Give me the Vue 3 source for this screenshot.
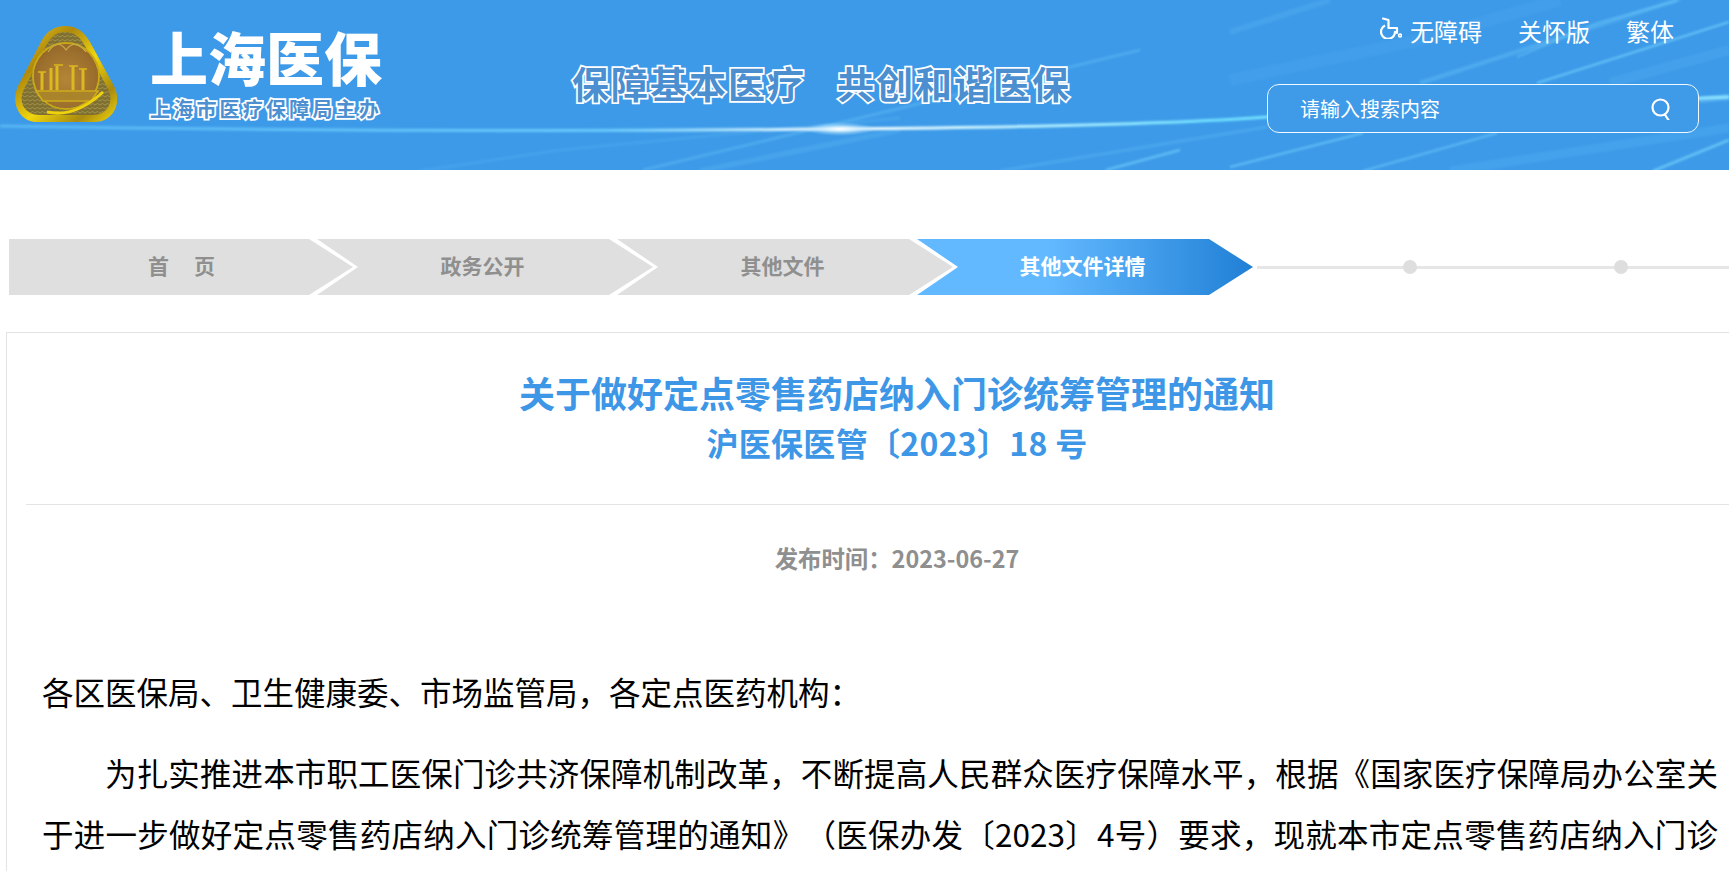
<script setup>
const crumbs = [
  { label: '首　页', first: true },
  { label: '政务公开' },
  { label: '其他文件' },
  { label: '其他文件详情', active: true }
]
const nav = ['关怀版', '繁体']
const streaks = [
  { d: 'M643 170 L922 103 L1140 50', w: 2.5, o: 0.3 },
  { d: 'M700 171 L900 130', w: 5, o: 0.16 },
  { d: 'M420 171 L560 150 L900 118', w: 3, o: 0.12 },
  { d: 'M1106 170 L1180 150', w: 2.5, o: 0.55 },
  { d: 'M1000 171 L1230 133 L1267 127', w: 3, o: 0.2 },
  { d: 'M1230 167 L1363 133', w: 2, o: 0.6 },
  { d: 'M1363 171 L1497 133', w: 2, o: 0.5 },
  { d: 'M1420 83 L1677 0', w: 4, o: 0.28 },
  { d: 'M1517 57 L1597 23 L1680 0', w: 2, o: 0.35 },
  { d: 'M1537 83 L1729 22', w: 2.2, o: 0.65 },
  { d: 'M1230 32 L1330 0', w: 6, o: 0.13 },
  { d: 'M1653 171 L1729 140', w: 2.5, o: 0.65 },
  { d: 'M1699 100 L1729 97', w: 6, o: 0.35 },
  { d: 'M1450 171 L1729 128', w: 9, o: 0.12 },
  { d: 'M1230 80 L1420 40 L1560 0', w: 12, o: 0.07 },
  { d: 'M1610 83 L1729 50', w: 10, o: 0.1 }
]
</script>

<template>
  <div class="page">
    <header class="header">
      <svg class="sky" viewBox="0 0 1729 170" width="1729" height="170" aria-hidden="true">
        <defs>
          <linearGradient id="beam" x1="0" x2="1" y1="0" y2="0">
            <stop offset="0" stop-color="#6fd3ff" stop-opacity=".5" />
            <stop offset=".35" stop-color="#6fd3ff" stop-opacity=".85" />
            <stop offset=".49" stop-color="#ffffff" />
            <stop offset=".7" stop-color="#6fe0ff" />
            <stop offset="1" stop-color="#8fe4ff" />
          </linearGradient>
          <radialGradient id="flare">
            <stop offset="0" stop-color="#ffffff" />
            <stop offset=".35" stop-color="#d9f4ff" stop-opacity=".75" />
            <stop offset="1" stop-color="#9fdcff" stop-opacity="0" />
          </radialGradient>
          <filter id="soft" x="-5%" y="-50%" width="110%" height="200%"><feGaussianBlur stdDeviation="1" /></filter>
        </defs>
        <g filter="url(#soft)" fill="none" stroke="#7bd8ff">
          <path v-for="(s, i) in streaks" :key="i" :d="s.d" :stroke-width="s.w" :stroke-opacity="s.o" />
        </g>
        <path d="M0 126 Q 420 133 840 129 Q 1150 126 1267 117 L 1729 97" fill="none" stroke="url(#beam)" stroke-width="3" filter="url(#soft)" />
        <ellipse cx="840" cy="129" rx="36" ry="7" fill="url(#flare)" />
      </svg>

      <div class="brand">
        <svg class="logo" viewBox="0 0 102 96" width="102" height="96" aria-hidden="true">
          <defs>
            <linearGradient id="gold" x1="0" y1="0" x2="1" y2="1">
              <stop offset="0" stop-color="#e9cc1a" />
              <stop offset=".3" stop-color="#b0890f" />
              <stop offset=".55" stop-color="#f0d60a" />
              <stop offset=".8" stop-color="#a98a12" />
              <stop offset="1" stop-color="#f4d90c" />
            </linearGradient>
            <radialGradient id="bronze" cx=".5" cy=".55" r=".6">
              <stop offset="0" stop-color="#b38636" />
              <stop offset="1" stop-color="#93662a" />
            </radialGradient>
            <pattern id="scale" width="5" height="4" patternUnits="userSpaceOnUse">
              <rect width="5" height="4" fill="#7f6f33" />
              <path d="M0 3 Q2.5 0 5 3" fill="none" stroke="#a89a4c" stroke-width=".8" />
            </pattern>
            <filter id="logoBlur"><feGaussianBlur stdDeviation=".45" /></filter>
          </defs>
          <g filter="url(#logoBlur)">
            <path d="M50 0C62 0 69 6 75 16L99 60C108 78 97 96 80 96L22 96C5 96-5 78 3 60L27 14C32 5 40 0 50 0Z" fill="url(#gold)" />
            <path d="M50 6C59 6 65 11 70 20L93 63C100 77 91 89 78 89L24 89C11 89 2 77 9 63L32 18C37 10 42 6 50 6Z" fill="url(#scale)" />
            <circle cx="51" cy="50" r="33" fill="none" stroke="#c9a715" stroke-width="2" />
            <circle cx="51" cy="50" r="32" fill="url(#bronze)" />
            <path d="M33 26Q43 12 51 24Q60 12 71 26" fill="none" stroke="#c9a84a" stroke-width="1.2" />
            <path d="M27 46V64M36 42V64M42 40V64M58 40V64M68 43V64" stroke="#dcb821" stroke-width="3" />
            <path d="M23 46H31M39 39H48M54 40H63M64 43H72" stroke="#dcb821" stroke-width="1.6" />
            <path d="M21 65H83L76 75H28Z" fill="#a9842a" stroke="#cfac1c" stroke-width="1.6" />
            <path d="M32 86Q60 92 88 66" fill="none" stroke="#efd20c" stroke-width="3" />
          </g>
        </svg>
        <div class="brand-text">
          <div class="brand-name">上海医保</div>
          <div class="brand-sub">上海市医疗保障局主办</div>
        </div>
      </div>

      <div class="slogan">
        <span>保障基本医疗</span>
        <span>共创和谐医保</span>
      </div>

      <div class="tools">
        <nav class="nav">
          <a class="nav-item access">
            <svg viewBox="0 0 22 22" width="22" height="22" fill="none" stroke="#fff" stroke-width="2.2" aria-hidden="true">
              <path d="M3 1.5L8.5 3V11H17V16" stroke-linecap="round" stroke-linejoin="round" />
              <path d="M5 8.5A7 7 0 1 0 15 14" />
              <circle cx="20" cy="18.5" r="1.4" stroke-width="1.6" />
            </svg>
            <span>无障碍</span>
          </a>
          <a v-for="n in nav" :key="n" class="nav-item">{{ n }}</a>
        </nav>
        <div class="search">
          <span class="placeholder">请输入搜索内容</span>
          <svg viewBox="0 0 20 22" width="20" height="22" fill="none" stroke="#fff" stroke-width="2.2" aria-hidden="true">
            <circle cx="9.5" cy="9.5" r="8" />
            <path d="M13.8 16.5L17.5 22" stroke-linecap="round" />
          </svg>
        </div>
      </div>
    </header>

    <div class="crumbs">
      <div
        v-for="c in crumbs"
        :key="c.label"
        class="crumb"
        :class="{ first: c.first, active: c.active }"
      >{{ c.label }}</div>
      <div class="track"><i class="dot one"></i><i class="dot two"></i></div>
    </div>

    <main class="card">
      <div class="heading">
        <h1>关于做好定点零售药店纳入门诊统筹管理的通知</h1>
        <h2>沪医保医管〔2023〕18 号</h2>
      </div>
      <div class="date">发布时间：2023-06-27</div>
      <article class="body">
        <p>各区医保局、卫生健康委、市场监管局，各定点医药机构：</p>
        <p class="indent">为扎实推进本市职工医保门诊共济保障机制改革，不断提高人民群众医疗保障水平，根据《国家医疗保障局办公室关于进一步做好定点零售药店纳入门诊统筹管理的通知》（医保办发〔2023〕4号）要求，现就本市定点零售药店纳入门诊</p>
      </article>
    </main>
  </div>
</template>

<style>
html, body { margin: 0; background: #fff; overflow: hidden; }
</style>

<style scoped>
.page {
  width: 1729px;
  height: 871px;
  overflow: hidden;
  font-family: "Noto Sans CJK SC", "Noto Sans", sans-serif;
  background: #fff;
}
.header {
  position: relative;
  height: 170px;
  display: flex;
  padding-left: 15px;
  box-sizing: border-box;
  background: #3d9ae8;
  overflow: hidden;
}
.sky { position: absolute; left: 0; top: 0; }
.brand { position: relative; display: flex; width: 366px; flex: none; padding-top: 26px; box-sizing: border-box; }
.logo { flex: none; }
.brand-text { margin-left: 33px; }
.brand-name {
  font-size: 58px;
  line-height: 60px;
  font-weight: 900;
  color: #fff;
}
.brand-sub {
  margin-top: 11px;
  width: 232px;
  font-size: 20px;
  line-height: 24px;
  letter-spacing: 3.2px;
  white-space: nowrap;
  font-weight: 700;
  color: #4d8fd0;
  -webkit-text-stroke: 3.5px #fff;
  paint-order: stroke fill;
}
.slogan {
  position: relative;
  margin-left: 191px;
  margin-top: 60px;
  display: flex;
  gap: 31px;
  height: 46px;
  font-size: 37px;
  line-height: 46px;
  letter-spacing: 2px;
  font-weight: 700;
  color: #4c8fd0;
  -webkit-text-stroke: 3.5px #fff;
  paint-order: stroke fill;
  white-space: nowrap;
}
.tools {
  position: relative;
  margin-left: auto;
  margin-right: 30px;
  width: 432px;
  display: flex;
  flex-direction: column;
}
.nav {
  display: flex;
  justify-content: flex-end;
  gap: 36px;
  padding: 13px 25px 0 0;
  height: 36px;
  box-sizing: content-box;
  margin-bottom: 35px;
  font-size: 24px;
  line-height: 36px;
  color: #fff;
}
.nav-item { white-space: nowrap; }
.access { display: flex; align-items: center; gap: 8px; }
.access svg { margin-top: -6px; }
.search {
  height: 49px;
  box-sizing: border-box;
  border: 1.5px solid #f2f9ff;
  border-radius: 12px;
  background: #3f9ae8;
  display: flex;
  align-items: center;
  justify-content: space-between;
  padding: 0 27px 0 32px;
  color: #fff;
}
.placeholder { font-size: 20px; line-height: 30px; }

.crumbs {
  display: flex;
  align-items: center;
  margin-top: 69px;
  padding-left: 9px;
  height: 56px;
}
.crumb {
  flex: none;
  width: 347px;
  height: 56px;
  margin-left: -47px;
  text-align: center;
  font-size: 21px;
  line-height: 52px;
  font-weight: 700;
  color: #8f8f8f;
  background: #dfdfdf;
  clip-path: polygon(8px 0, 300px 0, 344px 50%, 300px 100%, 8px 100%, 49px 50%);
}
.crumb.first {
  margin-left: 0;
  clip-path: polygon(0 0, 300px 0, 344px 50%, 300px 100%, 0 100%);
  letter-spacing: 2px;
}
.crumb.active {
  color: #fff;
  background: linear-gradient(90deg, #63b9ff 0%, #63b9ff 40%, #1f7fd5 100%);
}
.track {
  flex: 1;
  height: 3px;
  margin-left: 1px;
  background: #e6e6e6;
  display: flex;
  align-items: center;
}
.dot {
  flex: none;
  width: 14px;
  height: 14px;
  border-radius: 50%;
  background: #dedede;
}
.dot.one { margin-left: 146px; }
.dot.two { margin-left: 197px; }

.card {
  width: 1782px;
  margin: 37px 0 0 6px;
  padding: 34px 19px 0;
  box-sizing: border-box;
  height: 600px;
  border: 1px solid #e3e3e3;
  background: #fff;
}
.heading { padding-bottom: 37px; border-bottom: 1px solid #e4e4e4; text-align: center; }
h1, h2 { margin: 0; font-weight: 700; color: #3d97e6; line-height: 50px; }
h1 { font-size: 36px; }
h2 { font-size: 32px; letter-spacing: .3px; }
.date {
  margin-top: 38px;
  text-align: center;
  font-size: 23.4px;
  line-height: 30px;
  font-weight: 700;
  color: #8f8f8f;
}
.body {
  margin: 88px 0 0 16px;
  width: 1676px;
  font-size: 31.5px;
  line-height: 61px;
  color: #000;
  text-spacing-trim: space-all;
}
.body p { margin: 0 0 20px; }
.body .indent { text-indent: 2em; text-align: justify; text-align-last: justify; }
</style>
